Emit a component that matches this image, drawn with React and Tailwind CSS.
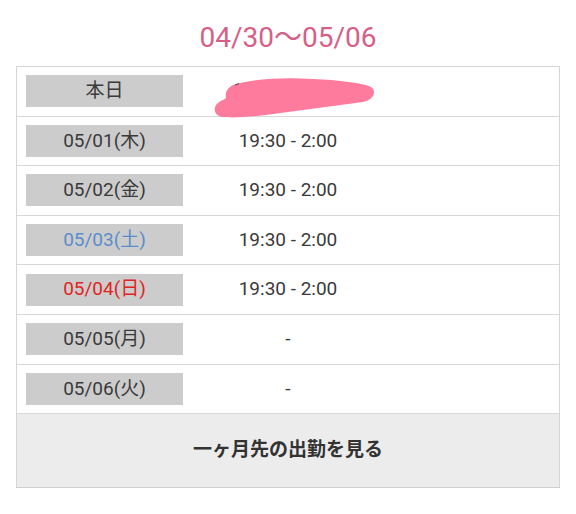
import React from "react";

const rows = [
  { d: "05/01(木)", v: "19:30 - 2:00", c: "text-[#3a3a3a]" },
  { d: "05/02(金)", v: "19:30 - 2:00", c: "text-[#3a3a3a]" },
  { d: "05/03(土)", v: "19:30 - 2:00", c: "text-[#5b8ccc]" },
  { d: "05/04(日)", v: "19:30 - 2:00", c: "text-[#e0241f]" },
  { d: "05/05(月)", v: "-", c: "text-[#3a3a3a]" },
  { d: "05/06(火)", v: "-", c: "text-[#3a3a3a]" },
];

const font = { fontFamily: 'Roboto, "Noto Sans CJK JP", sans-serif' };

function Row({ d, v, c, children }) {
  return (
    <div className="relative flex items-center h-[49.6px] border-b border-[#d8d8d8]">
      <div className={`ml-[9px] w-[157px] h-[32px] bg-[#cccccc] flex items-center justify-center text-[19px] ${c}`}>
        {d}
      </div>
      <div className="w-[210px] text-center text-[19px] text-[#3a3a3a]">{v}</div>
      {children}
    </div>
  );
}

export default function App() {
  return (
    <div className="w-[576px] h-[514px] bg-white" style={font}>
      <div className="h-[66px] pt-[19px] text-center text-[28px] leading-[38px] text-[#d65f88]">
        04/30〜05/06
      </div>
      <div className="mx-[16px] w-[544px] border border-[#d6d6d6] border-b-[#cfcfcf]">
        <Row d="本日" v="" c="text-[#3a3a3a]">
          <svg className="absolute left-[196px] top-[9px]" width="164" height="42" viewBox="0 0 164 42">
            <path
              d="M20 9 C40 3 70 1 100 3 C125 4 150 7 158 11 C164 15 161 24 150 26 C120 30 90 34 60 38 C40 41 20 42 10 41 C2 40 0 34 3 29 C6 25 11 24 13 22 C12 17 14 12 20 9 Z"
              fill="#ff7b9d"
            />
            <path d="M22 9 L26 7.5" stroke="#555" strokeWidth="1.2" />
          </svg>
        </Row>
        {rows.map((r) => (
          <Row key={r.d} {...r} />
        ))}
        <div className="h-[73px] bg-[#ececec] flex items-center justify-center text-[19px] font-bold text-[#333333]">
          一ヶ月先の出勤を見る
        </div>
      </div>
    </div>
  );
}
